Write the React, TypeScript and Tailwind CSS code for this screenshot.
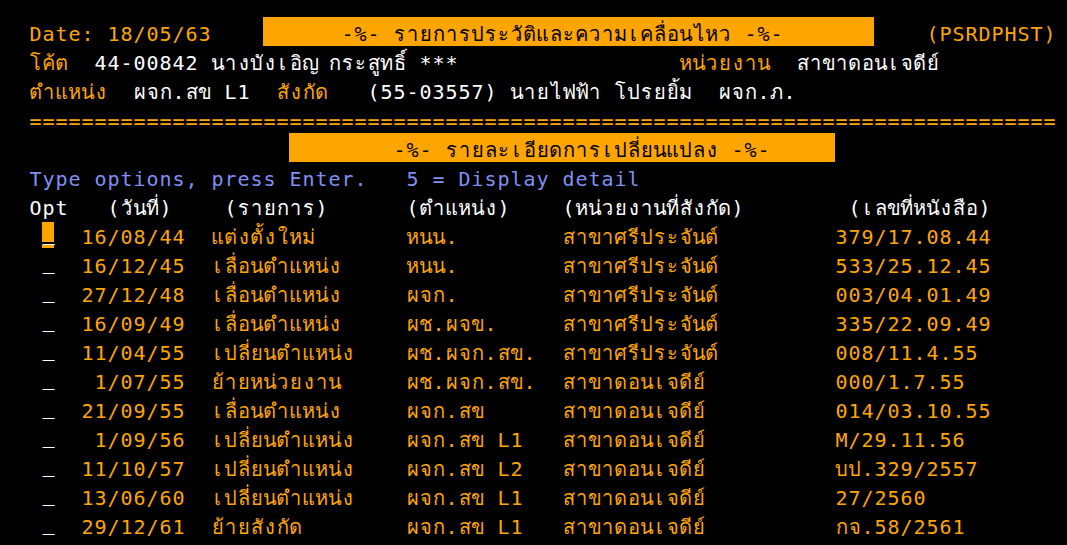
import React from "react";

type Seg = { col: number; text: string; cls: string; width?: number };

const O = "text-[#ffa500]";
const W = "text-white";
const B = "text-[#7f8ff4]";
const BANNER = "bg-[#ffa500] text-black";

// Thai marks that sit above/below the previous char share its cell
const isMark = (ch: string) => {
  const c = ch.charCodeAt(0);
  return c === 0x0e31 || (c >= 0x0e34 && c <= 0x0e3a) || (c >= 0x0e47 && c <= 0x0e4e);
};

function toCells(text: string): string[] {
  const out: string[] = [];
  for (const ch of text) {
    if (isMark(ch) && out.length) out[out.length - 1] += ch;
    else out.push(ch);
  }
  return out;
}

const ROWS = [
  ["16/08/44", "แต่งตั้งใหม่", "หนน.", "สาขาศรีประจันต์", "379/17.08.44"],
  ["16/12/45", "เลื่อนตำแหน่ง", "หนน.", "สาขาศรีประจันต์", "533/25.12.45"],
  ["27/12/48", "เลื่อนตำแหน่ง", "ผจก.", "สาขาศรีประจันต์", "003/04.01.49"],
  ["16/09/49", "เลื่อนตำแหน่ง", "ผช.ผจข.", "สาขาศรีประจันต์", "335/22.09.49"],
  ["11/04/55", "เปลี่ยนตำแหน่ง", "ผช.ผจก.สข.", "สาขาศรีประจันต์", "008/11.4.55"],
  [" 1/07/55", "ย้ายหน่วยงาน", "ผช.ผจก.สข.", "สาขาดอนเจดีย์", "000/1.7.55"],
  ["21/09/55", "เลื่อนตำแหน่ง", "ผจก.สข", "สาขาดอนเจดีย์", "014/03.10.55"],
  [" 1/09/56", "เปลี่ยนตำแหน่ง", "ผจก.สข L1", "สาขาดอนเจดีย์", "M/29.11.56"],
  ["11/10/57", "เปลี่ยนตำแหน่ง", "ผจก.สข L2", "สาขาดอนเจดีย์", "บป.329/2557"],
  ["13/06/60", "เปลี่ยนตำแหน่ง", "ผจก.สข L1", "สาขาดอนเจดีย์", "27/2560"],
  ["29/12/61", "ย้ายสังกัด", "ผจก.สข L1", "สาขาดอนเจดีย์", "กจ.58/2561"],
];

const LINES: Seg[][] = [
  [
    { col: 1, text: "Date: 18/05/63", cls: O },
    { col: 19, text: "      -%- รายการประวัติและความเคลื่อนไหว -%-", cls: BANNER, width: 47 },
    { col: 70, text: "(PSRDPHST)", cls: O },
  ],
  [
    { col: 1, text: "โค้ต", cls: O },
    { col: 6, text: "44-00842 นางบังเอิญ กระสูทธิ์ ***", cls: W },
    { col: 51, text: "หน่วยงาน", cls: O },
    { col: 60, text: "สาขาดอนเจดีย์", cls: W },
  ],
  [
    { col: 1, text: "ตำแหน่ง", cls: O },
    { col: 9, text: "ผจก.สข L1", cls: W },
    { col: 20, text: "สังกัด", cls: O },
    { col: 27, text: "(55-03557) นายไฟฟ้า โปรยยิ้ม  ผจก.ภ.", cls: W },
  ],
  [{ col: 1, text: "=".repeat(79), cls: O }],
  [{ col: 21, text: "        -%- รายละเอียดการเปลี่ยนแปลง -%-", cls: BANNER, width: 42 }],
  [{ col: 1, text: "Type options, press Enter.   5 = Display detail", cls: B }],
  [
    { col: 1, text: "Opt", cls: W },
    { col: 7, text: "(วันที่)", cls: W },
    { col: 16, text: "(รายการ)", cls: W },
    { col: 30, text: "(ตำแหน่ง)", cls: W },
    { col: 42, text: "(หน่วยงานที่สังกัด)", cls: W },
    { col: 64, text: "(เลขที่หนังสือ)", cls: W },
  ],
  ...ROWS.map((r) => [
    { col: 2, text: "_", cls: "text-white -translate-y-[4px]" },
    { col: 5, text: r[0], cls: O },
    { col: 15, text: r[1], cls: O },
    { col: 30, text: r[2], cls: O },
    { col: 42, text: r[3], cls: O },
    { col: 63, text: r[4], cls: O },
  ]),
];

function Cell({ ch }: { ch: string }) {
  return <span className="inline-block w-[13px] text-center whitespace-pre">{ch}</span>;
}

function Line({ segs, cursor }: { segs: Seg[]; cursor?: boolean }) {
  const parts: React.ReactNode[] = [];
  let cur = 0;
  segs.forEach((s, si) => {
    for (; cur < s.col; cur++) parts.push(<Cell key={`g${si}-${cur}`} ch=" " />);
    const cells = toCells(s.text);
    const n = s.width ?? cells.length;
    while (cells.length < n) cells.push(" ");
    const isCursor = cursor && s.col === 2;
    parts.push(
      <span key={`s${si}`} className={`relative inline-flex h-[29px] ${s.cls}`}>
        {isCursor && (
          <>
            <span className="absolute left-0 top-[6px] h-[20px] w-[12px] bg-[#ffa500]" />
            <span className="absolute left-0 top-[29px] h-[3px] w-[12px] bg-[#ffa500]" />
          </>
        )}
        {cells.map((c, i) => (
          <Cell key={i} ch={c} />
        ))}
      </span>
    );
    cur += n;
  });
  return <div className="flex h-[29px] items-start">{parts}</div>;
}

export default function App() {
  return (
    <div className="h-[545px] w-[1067px] overflow-hidden bg-black pl-[16px] pt-[17px] font-['DejaVu_Sans_Mono','Liberation_Mono',monospace] text-[20px] leading-[35px]">
      {LINES.map((segs, i) => (
        <Line key={i} segs={segs} cursor={i === 7} />
      ))}
    </div>
  );
}
